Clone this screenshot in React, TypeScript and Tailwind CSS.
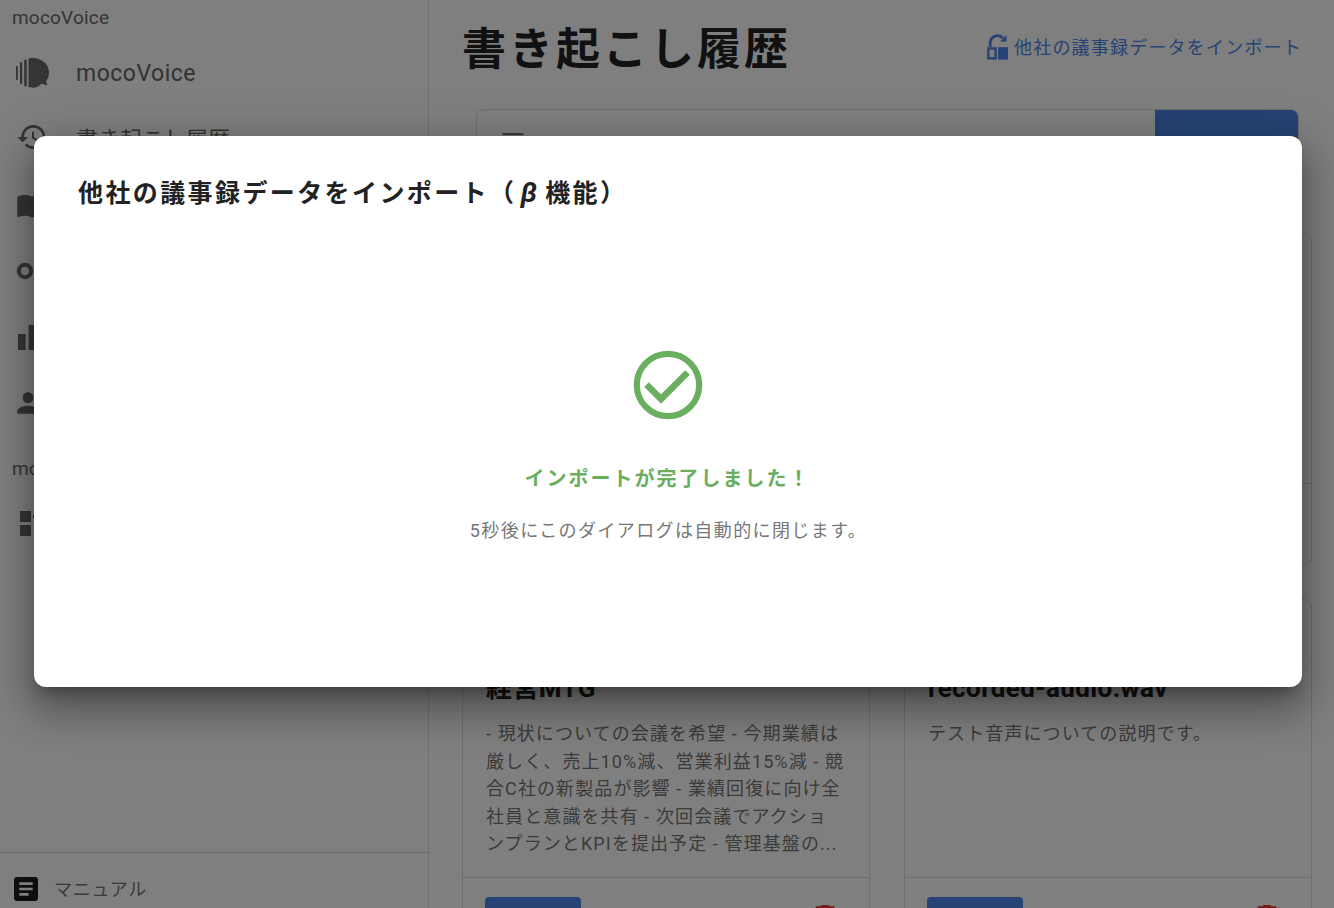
const FONT = "font-['Roboto','Noto_Sans_CJK_JP',sans-serif]";

function MuiIcon({ d, className = "" }: { d: string; className?: string }) {
  return (
    <svg viewBox="0 0 24 24" className={`w-8 h-8 shrink-0 fill-current ${className}`}>
      <path d={d} />
    </svg>
  );
}

const HISTORY = "M13 3c-4.97 0-9 4.03-9 9H1l3.89 3.89.07.14L9 12H6c0-3.87 3.13-7 7-7s7 3.13 7 7-3.13 7-7 7c-1.93 0-3.68-.79-4.94-2.06l-1.42 1.42C8.27 19.99 10.51 21 13 21c4.97 0 9-4.03 9-9s-4.03-9-9-9zm-1 5v5l4.28 2.54.72-1.21-3.5-2.08V8H12z";
const BOOK = "M21 5c-1.11-.35-2.33-.5-3.5-.5-1.95 0-4.05.4-5.5 1.5-1.45-1.1-3.55-1.5-5.5-1.5S2.45 4.9 1 6v14.65c0 .25.25.5.5.5.1 0 .15-.05.25-.05C3.1 20.45 5.05 20 6.5 20c1.95 0 4.05.4 5.5 1.5 1.35-.85 3.8-1.5 5.5-1.5 1.65 0 3.35.3 4.75 1.05.1.05.15.05.25.05.25 0 .5-.25.5-.5V6c-.6-.45-1.25-.75-2-1z";
const PERSON = "M12 12c2.21 0 4-1.79 4-4s-1.79-4-4-4-4 1.79-4 4 1.79 4 4 4zm0 2c-2.67 0-8 1.34-8 4v2h16v-2c0-2.66-5.33-4-8-4z";
const ARTICLE = "M19 3H5c-1.1 0-2 .9-2 2v14c0 1.1.9 2 2 2h14c1.1 0 2-.9 2-2V5c0-1.1-.9-2-2-2zm-5 14H7v-2h7v2zm3-4H7v-2h10v2zm0-4H7V7h10v2z";
const DELETE = "M6 19c0 1.1.9 2 2 2h8c1.1 0 2-.9 2-2V7H6v12zM19 4h-3.5l-1-1h-5l-1 1H5v2h14V4z";
const FILTER = "M10 18h4v-2h-4v2zM3 6v2h18V6H3zm3 7h12v-2H6v2z";

function Logo() {
  return (
    <svg viewBox="0 0 34 30" className="relative left-px w-[34px] h-[30px] shrink-0 fill-[#6a6a6a]">
      <rect x="0" y="8" width="1.8" height="14" rx="0.9" />
      <rect x="4" y="4" width="2.2" height="22" rx="1.1" />
      <rect x="8.2" y="1.5" width="2.6" height="27" rx="1.3" />
      <path d="M12.5 0.4C14 0.2 15 0 17 0c9 0 16 6.4 16 14.5 0 3.6-1.2 6.6-3 9l1.4 4-6-1.8c-2.4 2.4-5.4 4-8.4 4-2 0-3-.2-4.5-.4z" />
    </svg>
  );
}

function NavRow({ icon, children }: { icon: React.ReactNode; children?: React.ReactNode }) {
  return (
    <div className="h-[66px] flex items-center pl-4 gap-7 shrink-0 text-[#666666]">
      <div className="w-8 flex justify-center text-[#6a6a6a]">{icon}</div>
      {children}
    </div>
  );
}

function Sidebar() {
  return (
    <aside className="w-[429px] h-full shrink-0 border-r border-[#e0e0e0] flex flex-col">
      <div className="h-10 pl-3 pt-[7px] text-[19px] leading-[22px] tracking-[0.2px] text-[#6a6a6a]">mocoVoice</div>
      <NavRow icon={<Logo />}>
        <span className="text-[23px] tracking-[0.5px] pt-0.5 whitespace-nowrap">mocoVoice</span>
      </NavRow>
      <NavRow icon={<MuiIcon d={HISTORY} className="relative -top-0.5" />}>
        <span className="text-[22px] whitespace-nowrap">書き起こし履歴</span>
      </NavRow>
      <NavRow icon={<MuiIcon d={BOOK} />} />
      <NavRow
        icon={
          <svg viewBox="0 0 32 32" className="w-8 h-8 fill-none stroke-current" strokeWidth="4">
            <circle cx="9" cy="16" r="6.2" />
          </svg>
        }
      />
      <NavRow
        icon={
          <svg viewBox="0 0 32 32" className="w-8 h-8 fill-current">
            <rect x="2" y="13" width="7.6" height="16" />
            <rect x="12.6" y="4" width="7.6" height="25" />
            <rect x="23" y="18" width="7" height="11" />
          </svg>
        }
      />
      <NavRow
        icon={
          <svg viewBox="3 0 24 24" className="w-8 h-8 fill-current">
            <path d={PERSON} />
          </svg>
        }
      />
      <div className="h-[54px] pl-3 pt-[22px] text-[19px] leading-[22px] tracking-[0.2px] text-[#6a6a6a]">mocoVoice</div>
      <NavRow
        icon={
          <svg viewBox="0 -4 32 32" className="w-8 h-8 fill-current">
            <rect x="4" y="0" width="11" height="11" />
            <rect x="4" y="14" width="11" height="11" />
            <rect x="17" y="4" width="11" height="3" />
          </svg>
        }
      />
      <div className="mt-auto h-14 border-t border-[#d8d8d8] flex items-start pt-5 pl-2.5 gap-3">
        <MuiIcon d={ARTICLE} className="text-[#1c1c1c]" />
        <span className="text-[18px] leading-[34px] tracking-[0.7px] text-[#777777]">マニュアル</span>
      </div>
    </aside>
  );
}

function Card({ title, lines }: { title: string; lines: string[] }) {
  return (
    <div className="flex-1 min-w-0 h-[400px] border border-[#dddddd] rounded-lg flex flex-col">
      <div className="h-[278px] border-b border-[#dddddd] px-[23px] pt-[71px]">
        <div className="text-[26px] leading-[34px] font-bold text-[#222222] tracking-[0.4px] whitespace-nowrap">{title}</div>
        <div className="mt-[15px] text-[18px] leading-[27.5px] tracking-[1.1px] text-[#777777]">
          {lines.map((l) => (
            <div key={l} className="whitespace-nowrap">{l}</div>
          ))}
        </div>
      </div>
      <div className="flex justify-between items-start px-[22px] pt-[19px]">
        <div className="w-24 h-10 rounded bg-[#4b86e8]" />
        <MuiIcon d={DELETE} className="text-[#e53935] relative top-1 right-1.5" />
      </div>
    </div>
  );
}

function Main() {
  return (
    <main className="flex-1 min-w-0 h-full flex flex-col overflow-hidden pl-[33px] pr-[22px]">
      <div className="flex items-center justify-between h-[96px] pr-2.5 shrink-0">
        <h1 className="relative top-0.5 text-[44px] leading-[96px] font-bold tracking-[3px] text-[#222222] whitespace-nowrap">書き起こし履歴</h1>
        <div className="relative -top-px flex items-center gap-[5px] text-[#4b86e8]">
          <svg viewBox="0 0 22 26" className="w-[22px] h-[26px] fill-none stroke-current">
            <path d="M3.2 13V9a7.3 7.3 0 0 1 12.6-5" strokeWidth="2.8" />
            <path d="M19.5 1v6.6h-6.6z" className="fill-current" strokeWidth="0" />
            <rect x="1.4" y="14.4" width="7.2" height="10" strokeWidth="2.4" />
            <rect x="11" y="13.2" width="10" height="12.4" className="fill-current" strokeWidth="0" />
          </svg>
          <span className="text-[18px] tracking-[1.2px] whitespace-nowrap">他社の議事録データをインポート</span>
        </div>
      </div>
      <div className="ml-[14px] mr-[13px] mt-[13px] h-[76px] shrink-0 flex border border-[#dddddd] rounded-lg overflow-hidden">
        <div className="flex-1 flex items-center pl-[22px] gap-3 text-[#777777]">
          <svg viewBox="0 0 24 24" className="w-7 h-7 fill-current relative -top-[7px]">
            <path d={FILTER} />
          </svg>
          <span className="text-[18px]">タイトルや要約で検索</span>
        </div>
        <div className="w-[143px] bg-[#4b86e8] flex items-center justify-center text-white text-[18px]">検索</div>
      </div>
      <div className="flex gap-[34px] mt-[48px] shrink-0">
        <div className="flex-1 min-w-0 h-[332px] border border-[#dddddd] rounded-lg flex flex-col">
          <div className="h-[250px] border-b border-[#dddddd]" />
        </div>
        <div className="flex-1 min-w-0 h-[332px] border border-[#dddddd] rounded-lg flex flex-col">
          <div className="h-[250px] border-b border-[#dddddd]" />
        </div>
      </div>
      <div className="flex gap-[34px] mt-[34px] shrink-0">
        <Card
          title="経営MTG"
          lines={[
            "- 現状についての会議を希望 - 今期業績は",
            "厳しく、売上10%減、営業利益15%減 - 競",
            "合C社の新製品が影響 - 業績回復に向け全",
            "社員と意識を共有 - 次回会議でアクショ",
            "ンプランとKPIを提出予定 - 管理基盤の...",
          ]}
        />
        <Card title="recorded-audio.wav" lines={["テスト音声についての説明です。"]} />
      </div>
    </main>
  );
}

export default function App() {
  return (
    <div className={`relative w-[1334px] h-[908px] overflow-hidden bg-white flex ${FONT}`}>
      <Sidebar />
      <Main />
      <div className="absolute inset-0 bg-black/50 pt-[136px] pl-[34px]">
        <div className="w-[1268px] h-[551px] bg-white rounded-xl flex flex-col shadow-[0_11px_15px_-7px_rgba(0,0,0,0.32),0_24px_38px_3px_rgba(0,0,0,0.22),0_9px_46px_8px_rgba(0,0,0,0.18)]">
          <h2 className="pl-11 pt-[38px] text-[25px] leading-[40px] font-bold tracking-[2.4px] text-[#222222] whitespace-nowrap">
            他社の議事録データをインポート（<span className="italic text-[28px] leading-none ml-1 mr-1.5">β</span>機能）
          </h2>
          <div className="flex flex-col items-center pt-[136px] pr-px">
            <svg viewBox="0 0 70 70" className="w-[70px] h-[70px] fill-none stroke-[#6aae5f]">
              <circle cx="35" cy="35" r="31.2" strokeWidth="6.2" />
              <path d="M13.5 34.5 28 49 54.5 22.5" strokeWidth="6.6" />
            </svg>
            <div className="mt-[44px] text-[20px] leading-[30px] font-bold tracking-[2px] text-[#6aae5f] whitespace-nowrap">
              インポートが完了しました！
            </div>
            <div className="relative left-px mt-[23px] text-[18px] leading-[28px] tracking-[1.4px] text-[#777777] whitespace-nowrap">
              5秒後にこのダイアログは自動的に閉じます。
            </div>
          </div>
        </div>
      </div>
    </div>
  );
}
